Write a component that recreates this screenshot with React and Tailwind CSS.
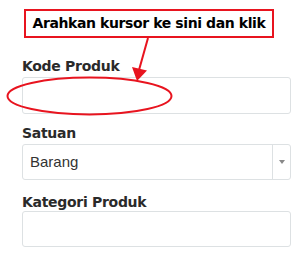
export default function App() {
  const label = "text-[14px] leading-[18px] font-bold text-[#2a2a2a] tracking-[-0.3px] [font-family:'DejaVu_Sans',sans-serif]";
  return (
    <div className="relative w-[300px] h-[255px] bg-white overflow-hidden">
      <div className="flex flex-col pl-[22px] pr-[9px] pt-[57px]">
        <div className={label}>Kode Produk</div>
        <div className="mt-[2px] h-[37px] rounded-[3px] border border-[#dde1e3] bg-white" />
        <div className={label + " mt-[10px]"}>Satuan</div>
        <div className="mt-[2px] h-[36px] rounded-[3px] border border-[#dde1e3] bg-white flex items-center">
          <span className="flex-1 pl-[7px] text-[15px] text-[#333] [font-family:'Liberation_Sans',sans-serif]">Barang</span>
          <div className="w-[18px] h-full border-l border-[#dde1e3] flex items-center justify-center">
            <svg width="6" height="4" viewBox="0 0 6 4"><path d="M0 0h6L3 4z" fill="#888" /></svg>
          </div>
        </div>
        <div className={label + " mt-[13px]"}>Kategori Produk</div>
        <div className="mt-[0px] h-[36px] rounded-[3px] border border-[#dde1e3] bg-white" />
      </div>

      <svg className="absolute inset-0 pointer-events-none" width="300" height="255" viewBox="0 0 300 255">
        <ellipse cx="89.5" cy="96" rx="82" ry="18.5" fill="none" stroke="#e8141f" strokeWidth="2" />
        <line x1="148" y1="38" x2="139" y2="70" stroke="#e8141f" strokeWidth="2" />
        <path d="M132 67 L147 70.5 L137 81 Z" fill="#e8141f" />
      </svg>

      <div className="absolute left-[24px] top-[9px] w-[250px] h-[29px] border-2 border-[#e8141f] bg-white flex items-center justify-center">
        <span className="text-[14px] font-bold text-black tracking-[-0.4px] [font-family:'DejaVu_Sans',sans-serif]">Arahkan kursor ke sini dan klik</span>
      </div>
    </div>
  );
}
